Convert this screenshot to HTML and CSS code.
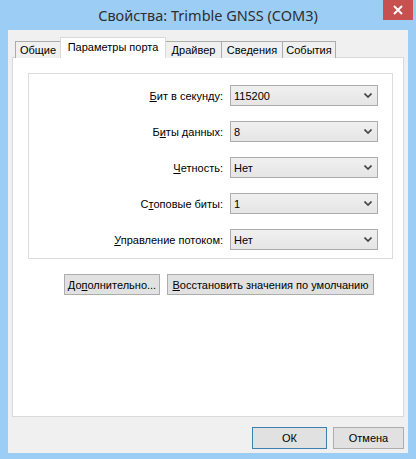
FILE: index.html
```html
<!DOCTYPE html>
<html lang="ru">
<head>
    <meta charset="UTF-8">
    <title>Свойства: Trimble GNSS (COM3)</title>
    <link rel="stylesheet" href="styles.css">
</head>
<body>
<div class="window">
    <div class="titlebar">
        <span></span>
        <span class="title">Свойства: Trimble GNSS (COM3)</span>
        <button class="close" aria-label="Закрыть">
            <svg width="10" height="10" viewBox="0 0 10 10"><path d="M1 1L9 9M9 1L1 9" stroke="#fff" stroke-width="2"/></svg>
        </button>
    </div>
    <div class="client">
        <div class="tabs">
            <div class="tab t1">Общие</div>
            <div class="tab active t2">Параметры порта</div>
            <div class="tab t3">Драйвер</div>
            <div class="tab t4">Сведения</div>
            <div class="tab t5 last">События</div>
        </div>
        <div class="panel">
            <div class="group">
                <label class="label"><u>Б</u>ит в секунду:</label>
                <div class="select"><span>115200</span><svg class="chev" width="8" height="5" viewBox="0 0 8 5"><path d="M0.5 0.5L4 4L7.5 0.5" fill="none" stroke="#404040" stroke-width="1.6"/></svg></div>

                <label class="label">Б<u>и</u>ты данных:</label>
                <div class="select"><span>8</span><svg class="chev" width="8" height="5" viewBox="0 0 8 5"><path d="M0.5 0.5L4 4L7.5 0.5" fill="none" stroke="#404040" stroke-width="1.6"/></svg></div>

                <label class="label"><u>Ч</u>етность:</label>
                <div class="select"><span>Нет</span><svg class="chev" width="8" height="5" viewBox="0 0 8 5"><path d="M0.5 0.5L4 4L7.5 0.5" fill="none" stroke="#404040" stroke-width="1.6"/></svg></div>

                <label class="label">С<u>т</u>оповые биты:</label>
                <div class="select"><span>1</span><svg class="chev" width="8" height="5" viewBox="0 0 8 5"><path d="M0.5 0.5L4 4L7.5 0.5" fill="none" stroke="#404040" stroke-width="1.6"/></svg></div>

                <label class="label"><u>У</u>правление потоком:</label>
                <div class="select"><span>Нет</span><svg class="chev" width="8" height="5" viewBox="0 0 8 5"><path d="M0.5 0.5L4 4L7.5 0.5" fill="none" stroke="#404040" stroke-width="1.6"/></svg></div>
            </div>
            <div class="actions">
                <button class="btn more">До<u>п</u>олнительно...</button>
                <button class="btn restore"><u>В</u>осстановить значения по умолчанию</button>
            </div>
        </div>
        <div class="footer">
            <button class="btn ok">ОК</button>
            <button class="btn cancel">Отмена</button>
        </div>
    </div>
</div>
</body>
</html>
```

FILE: styles.css
```css
body {
    margin: 0;
    padding: 0;
    background-color: #9ccdf4;
    font-family: "Liberation Sans", Arial, sans-serif;
    font-size: 11px;
    color: #000;
}

.window {
    width: 416px;
    height: 459px;
    background-color: #9ccdf4;
}

.titlebar {
    height: 30px;
    display: grid;
    grid-template-columns: 1fr auto 1fr;
    align-items: start;
}

.title {
    font-family: "Noto Sans", "Open Sans", sans-serif;
    font-size: 14.5px;
    line-height: 30px;
    color: #2e2e2e;
}

.close {
    justify-self: end;
    width: 30px;
    height: 20px;
    margin-right: 3px;
    padding: 0;
    border: none;
    background-color: #c75050;
    display: flex;
    align-items: center;
    justify-content: center;
}

.client {
    margin: 0 8px;
    height: 423px;
    background-color: #f0f0f0;
    padding: 8px 4px 0;
    box-sizing: border-box;
}

.tabs {
    display: flex;
    align-items: flex-end;
    padding-left: 3px;
    height: 20px;
    margin-bottom: -1px;
}

.tab {
    height: 16px;
    line-height: 17px;
    text-align: center;
    white-space: nowrap;
    border: 1px solid #acacac;
    border-right: none;
    border-bottom: none;
    background-color: #f0f0f0;
    box-sizing: content-box;
}

.tab.last {
    border-right: 1px solid #acacac;
}

.tab.active {
    height: 20px;
    line-height: 18px;
    background-color: #fff;
    border-right: 1px solid #d9d9d9;
    border-left-color: #d9d9d9;
    border-top-color: #d9d9d9;
    position: relative;
    z-index: 1;
    margin-right: -1px;
}

.t1 { width: 44px; }
.t2 { width: 104px; }
.t3 { width: 55px; }
.t4 { width: 60px; }
.t5 { width: 52px; }

.panel {
    height: 360px;
    box-sizing: border-box;
    border: 1px solid #d9d9d9;
    background-color: #fff;
    padding: 15px 10px 0 15px;
}

.group {
    border: 1px solid #dcdcdc;
    padding: 11px 14px 8px 0;
    display: grid;
    grid-template-columns: 1fr 148px;
    column-gap: 7px;
    row-gap: 15px;
    align-items: center;
}

.label {
    text-align: right;
    white-space: nowrap;
}

.select {
    height: 21px;
    box-sizing: border-box;
    border: 1px solid #acacac;
    background: linear-gradient(#f0f0f0, #e5e5e5);
    display: flex;
    align-items: center;
    justify-content: space-between;
    padding: 0 5px 0 3px;
}

.actions {
    display: flex;
    gap: 7px;
    margin-top: 15px;
    padding-left: 36px;
}

.btn {
    height: 21px;
    box-sizing: border-box;
    border: 1px solid #adadad;
    background-color: #e1e1e1;
    font-family: "Liberation Sans", Arial, sans-serif;
    font-size: 11px;
    color: #000;
    padding: 0;
    white-space: nowrap;
}

.more { width: 96px; }
.restore { width: 207px; }

.footer {
    display: flex;
    justify-content: flex-end;
    gap: 6px;
    margin-top: 10px;
}

.ok, .cancel {
    width: 75px;
    height: 22px;
}

.ok {
    border-color: #3c7fb1;
}

.cancel {
    width: 71px;
}
```
